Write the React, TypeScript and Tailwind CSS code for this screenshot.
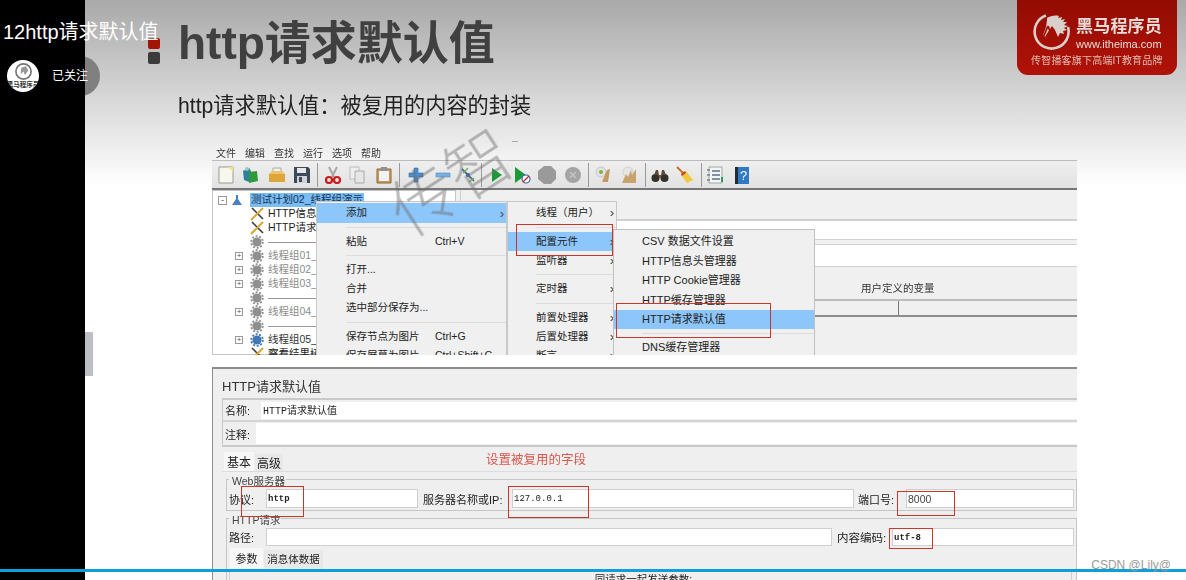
import React from 'react'

const Sep = ({ className }: { className: string }) => (
  <div className={`h-[24px] w-px bg-[#9a9a9a] ${className}`} />
)

const Ico = ({ className = '', children }: { className?: string; children: React.ReactNode }) => (
  <svg viewBox="0 0 18 18" className={`h-[18px] w-[18px] shrink-0 ${className}`}>
    {children}
  </svg>
)

const Toolbar = () => (
  <div className="flex h-[30px] items-center border-y border-t-[#bcbcbc] border-b-2 border-b-[#777] bg-[linear-gradient(180deg,#efefef,#e2e2e2)] pl-[5px]">
    <Ico><path d="M2 1h14v16H2z" fill="#f7f7ee" stroke="#9a9a9a" /><path d="M11 1h5v5z" fill="#f2e48a" /></Ico>
    <Ico className="ml-[6px]"><path d="M2 5l6-3 2 3-2 11-5-2z" fill="#2f7fa0" /><path d="M8 6l8-1 1 10-9 2z" fill="#2f9a3c" /><circle cx="6" cy="3" r="2" fill="#9cb" /></Ico>
    <Ico className="ml-[9px]"><path d="M5 6V2h8v4z" fill="#f0f0f0" stroke="#aaa" /><path d="M1 8h16v8H1z" fill="#dca63a" /><path d="M1 8l3-3h10l3 3z" fill="#eec46a" /></Ico>
    <Ico className="ml-[7px]"><path d="M1 1h14l2 2v14H1z" fill="#3d4a5c" /><path d="M4 2h9v5H4z" fill="#e8e8e8" /><path d="M4 10h10v7H4z" fill="#cfd3d8" /><path d="M6 11h3v5H6z" fill="#3d4a5c" /></Ico>
    <Sep className="ml-[6px]" />
    <Ico className="ml-[6px]"><path d="M5 1l5 10M13 1L8 11" stroke="#a8a8a8" strokeWidth="2" fill="none" /><circle cx="5" cy="14" r="3" fill="none" stroke="#c8201c" strokeWidth="2.2" /><circle cx="13" cy="14" r="3" fill="none" stroke="#c8201c" strokeWidth="2.2" /></Ico>
    <Ico className="ml-[6px]"><path d="M2 1h9v12H2z" fill="#efefef" stroke="#bbb" /><path d="M7 5h9v12H7z" fill="#e6e6e6" stroke="#aaa" /></Ico>
    <Ico className="ml-[9px]"><path d="M2 3h14v14H2z" fill="#c89b5c" stroke="#8c6a3a" /><path d="M4 5h10v10H4z" fill="#f2f2f2" /><path d="M6 1h6v4H6z" fill="#8d9298" /></Ico>
    <Sep className="ml-[6px]" />
    <Ico className="ml-[7px]"><path d="M7 2h4v5h5v4h-5v5H7v-5H2V7h5z" fill="#4b8fd0" stroke="#2d6aa5" strokeWidth=".6" /></Ico>
    <Ico className="ml-[9px]"><path d="M2 7h14v4H2z" fill="#7aaedb" stroke="#4b8fd0" strokeWidth=".6" /></Ico>
    <Ico className="ml-[7px]"><path d="M3 3l12 12" stroke="#4a6f9a" strokeWidth="1.8" /><path d="M4 7l5-5" stroke="#74b04a" strokeWidth="1.5" /><path d="M10 16l5-4" stroke="#74b04a" strokeWidth="1.5" /><circle cx="9" cy="9" r="2" fill="#2d66b0" /></Ico>
    <Sep className="ml-[4px]" />
    <Ico className="ml-[6px]"><path d="M4 2l10 7-10 7z" fill="#1c9a3a" /></Ico>
    <Ico className="ml-[7px]"><path d="M2 1l11 8-11 8z" fill="#1c9a3a" /><circle cx="13" cy="13" r="4" fill="#fff" stroke="#3565b5" strokeWidth="1.2" /><path d="M10 16l6-6" stroke="#d02020" strokeWidth="1.2" /></Ico>
    <Ico className="ml-[7px]"><path d="M6 0h7l5 5v8l-5 5H6l-6-5V5z" fill="#9a9a9a" /></Ico>
    <Ico className="ml-[8px]"><circle cx="9" cy="9" r="8" fill="#a4a4a4" /><path d="M6 6l6 6M12 6l-6 6" stroke="#c4c4c4" strokeWidth="1.5" /></Ico>
    <Sep className="ml-[6px]" />
    <Ico className="ml-[5px]"><circle cx="7" cy="6" r="5" fill="#e3e3e3" stroke="#c8c8c8" /><circle cx="7" cy="6" r="2" fill="#7cb342" /><path d="M8 16l5-12 3-1-2 13z" fill="#c49a62" /></Ico>
    <Ico className="ml-[9px]"><circle cx="7" cy="6" r="5" fill="#e6e6e6" stroke="#cfcfcf" /><path d="M1 17l4-9 2 3 3-7 1 5 4-6v14z" fill="#c9a26e" /></Ico>
    <Sep className="ml-[6px]" />
    <Ico className="ml-[5px]"><circle cx="4.5" cy="12" r="4" fill="#33302c" /><circle cx="13.5" cy="12" r="4" fill="#33302c" /><path d="M3 9l2-5h2l1 5zM10 9l1-5h2l2 5z" fill="#5b4a3a" /><path d="M8 9h2v3H8z" fill="#7a5a3a" /></Ico>
    <Ico className="ml-[7px]"><path d="M1 1l7 7" stroke="#b9772a" strokeWidth="2" /><path d="M5 9l5-4 7 9-6 3z" fill="#f1c93e" /><path d="M5 8l4-3 1 2-4 3z" fill="#c8402a" /></Ico>
    <Sep className="ml-[7px]" />
    <Ico className="ml-[4px]"><path d="M3 1h13v16H3z" fill="#f4f4f4" stroke="#9aa" /><path d="M6 5h8M6 9h8M6 13h8" stroke="#5e6f86" strokeWidth="1.6" /><path d="M1 4h3M1 9h3M1 14h3" stroke="#555" /><path d="M15 11h2v5h-2z" fill="#2e9a5a" /></Ico>
    <Ico className="ml-[9px]"><path d="M2 1h14v17H2z" fill="#2f79c6" /><path d="M2 1h3v17H2z" fill="#1e2c3e" /><text x="7" y="14" fontSize="13" fill="#fff">?</text></Ico>
  </div>
)

const Gear = ({ color = '#8f8f8f' }: { color?: string }) => (
  <svg viewBox="0 0 14 14" className="h-[14px] w-[14px] shrink-0">
    <circle cx="7" cy="7" r="4.6" fill={color} />
    <circle cx="7" cy="7" r="5.8" fill="none" stroke={color} strokeWidth="1.8" strokeDasharray="2 1.6" />
  </svg>
)

const Wrench = () => (
  <svg viewBox="0 0 14 14" className="h-[14px] w-[14px] shrink-0">
    <path d="M2 1l11 11" stroke="#3a3a3a" strokeWidth="1.6" />
    <path d="M13 1L1 13" stroke="#d6a93a" strokeWidth="2.2" />
  </svg>
)

const Expander = ({ show }: { show: boolean }) => (
  <div className="flex w-[12px] shrink-0 items-center justify-center">
    {show && (
      <div className="flex h-[8px] w-[8px] items-center justify-center border border-[#9a9a9a] bg-white text-[8px] leading-none text-[#555]">
        +
      </div>
    )}
  </div>
)

const TreeRow = ({ plus, icon, children }: { plus?: boolean; icon: React.ReactNode; children?: React.ReactNode }) => (
  <div className="flex h-[14px] items-center whitespace-nowrap pl-[20px]">
    <Expander show={!!plus} />
    <div className="ml-[4px] flex w-[16px] justify-center">{icon}</div>
    <div className="ml-[3px] flex-1 overflow-hidden">{children}</div>
  </div>
)

const GroupName = ({ label, dim = true }: { label: string; dim?: boolean }) => (
  <span className={dim ? 'text-[#8c8c8c]' : 'text-[#333]'}>{label}</span>
)

const Line = () => <div className="mr-[10px] h-px bg-[#999]" />

const Tree = () => (
  <div className="w-[244px] shrink-0 border border-[#c4c4c4] bg-white pt-[2px] text-[10.5px] text-[#222]">
    <div className="flex h-[14px] items-center whitespace-nowrap pl-[5px]">
      <div className="flex h-[9px] w-[9px] items-center justify-center border border-[#9a9a9a] text-[9px] leading-none text-[#555]">-</div>
      <div className="ml-[5px] h-[10px] w-[10px]">
        <svg viewBox="0 0 10 10"><path d="M4 0h2v4l4 6H0l4-6z" fill="#4a7fc0" /></svg>
      </div>
      <div className="ml-[8px] flex h-[14px] w-[114px] items-center bg-[#79bcf6] pl-px text-[#14324e]">测试计划02_线程组演示</div>
    </div>
    <TreeRow icon={<Wrench />}>HTTP信息头管理器</TreeRow>
    <TreeRow icon={<Wrench />}>HTTP请求默认值</TreeRow>
    <TreeRow icon={<Gear />}><Line /></TreeRow>
    <TreeRow plus icon={<Gear />}><GroupName label="线程组01_基本" /></TreeRow>
    <TreeRow plus icon={<Gear />}><GroupName label="线程组02_基本" /></TreeRow>
    <TreeRow plus icon={<Gear />}><GroupName label="线程组03_基本" /></TreeRow>
    <TreeRow icon={<Gear />}><Line /></TreeRow>
    <TreeRow plus icon={<Gear />}><GroupName label="线程组04_基本" /></TreeRow>
    <TreeRow icon={<Gear />}><Line /></TreeRow>
    <TreeRow plus icon={<Gear color="#3f78b5" />}><GroupName label="线程组05_基本" dim={false} /></TreeRow>
    <TreeRow icon={<Wrench />}>察看结果树</TreeRow>
  </div>
)

const Divider = ({ h, inset = 'ml-[29px]' }: { h: string; inset?: string }) => (
  <div className={`flex items-center ${h}`}>
    <div className={`h-px flex-1 bg-[#dcdcdc] ${inset}`} />
  </div>
)

const Item = ({
  label,
  right,
  arrow,
  active,
  h = 'h-[19px]',
  pl = 'pl-[29px]',
}: {
  label: string
  right?: string
  arrow?: boolean
  active?: boolean
  h?: string
  pl?: string
}) => (
  <div className={`relative flex items-center whitespace-nowrap ${h} ${pl} ${active ? 'bg-[#8cc6fa]' : ''}`}>
    <span>{label}</span>
    {right && <span className="absolute left-[118px]">{right}</span>}
    {arrow && <span className="absolute right-[2px] text-[13px] leading-none text-[#444]">›</span>}
  </div>
)

const ContextMenus = () => (
  <>
    <div className="absolute left-[104px] top-[54px] z-10 h-[170px] w-[191px] border border-[#c8c8c8] bg-[#f0f0f0] pt-[1px] text-[10.5px] text-[#222]">
      <Item label="添加" arrow active h="h-[20px]" />
      <Divider h="h-[9px]" />
      <Item label="粘贴" right="Ctrl+V" />
      <Divider h="h-[9px]" />
      <Item label="打开..." />
      <Item label="合并" />
      <Item label="选中部分保存为..." />
      <Divider h="h-[10px]" />
      <Item label="保存节点为图片" right="Ctrl+G" />
      <Item label="保存屏幕为图片" right="Ctrl+Shift+G" />
    </div>
    <div className="absolute left-[295px] top-[54px] z-10 h-[170px] w-[110px] border border-[#c8c8c8] bg-[#f0f0f0] pt-[1px] text-[10.5px] text-[#222]">
      <Item label="线程（用户）" arrow pl="pl-[28px]" />
      <Divider h="h-[10px]" inset="ml-[28px]" />
      <Item label="配置元件" arrow active pl="pl-[28px]" />
      <Item label="监听器" arrow pl="pl-[28px]" />
      <Divider h="h-[9px]" inset="ml-[28px]" />
      <Item label="定时器" arrow pl="pl-[28px]" />
      <Divider h="h-[10px]" inset="ml-[28px]" />
      <Item label="前置处理器" arrow pl="pl-[28px]" />
      <Item label="后置处理器" arrow pl="pl-[28px]" />
      <Item label="断言" arrow pl="pl-[28px]" />
    </div>
    <div className="absolute left-[401px] top-[82px] z-20 h-[140px] w-[202px] border border-[#c0c0c0] bg-[#f0f0f0] pt-[2px] text-[11px] text-[#222]">
      <Item label="CSV 数据文件设置" pl="pl-[28px]" />
      <Item label="HTTP信息头管理器" h="h-[20px]" pl="pl-[28px]" />
      <Item label="HTTP Cookie管理器" pl="pl-[28px]" />
      <Item label="HTTP缓存管理器" h="h-[20px]" pl="pl-[28px]" />
      <Item label="HTTP请求默认值" active pl="pl-[28px]" />
      <Divider h="h-[9px]" inset="ml-[28px]" />
      <Item label="DNS缓存管理器" pl="pl-[28px]" />
    </div>
    <div className="absolute left-[304px] top-[77px] z-30 h-[32px] w-[97px] border border-[#c8352b]" />
    <div className="absolute left-[404px] top-[156px] z-30 h-[35px] w-[155px] border border-[#c8352b]" />
  </>
)

const JMeterTop = () => (
  <section className="relative ml-[127px] h-[208px] w-[865px] shrink-0 overflow-hidden blur-[0.35px]">
    <div className="flex h-[13px] items-center gap-[9px] pl-[4px] text-[10px] leading-none text-[#333]">
      <span>文件</span>
      <span>编辑</span>
      <span>查找</span>
      <span>运行</span>
      <span>选项</span>
      <span>帮助</span>
    </div>
    <Toolbar />
    <div className="flex h-[165px] bg-[#f0f0f0]">
      <Tree />
      <div className="ml-[4px] flex flex-1 flex-col">
        <div className="h-[31px] border-b-2 border-l border-[#cfcfcf]" />
        <div className="h-[18px] bg-white" />
        <div className="h-[6px] border-y border-[#d2d2d2] bg-[#f0f0f0]" />
        <div className="h-[21px] bg-white" />
        <div className="flex h-[33px] items-end border-t border-[#d0d0d0] pb-[2px] text-[10.5px] text-[#333]">
          <span className="ml-[401px]">用户定义的变量</span>
        </div>
        <div className="flex h-[18px] border-y-2 border-t-[#bcbcbc] border-b-[#8c8c8c]">
          <div className="ml-[438px] w-px bg-[#777]" />
        </div>
      </div>
    </div>
    <ContextMenus />
  </section>
)

const Field = ({ className, value }: { className: string; value?: string }) => (
  <div className={`flex shrink-0 items-center border border-[#cfcfcf] bg-white pl-px text-[#222] ${className}`}>
    {value}
  </div>
)

const mono = "[font-family:'Liberation_Mono','Noto_Sans_CJK_SC',monospace]"

const JMeterBottom = () => (
  <section className="relative ml-[127px] h-[213px] w-[865px] shrink-0 overflow-hidden border-t-2 border-l border-[#8c8c8c] bg-[#efefef] pl-[9px] text-[11px] text-[#222] blur-[0.35px]">
    <div className="flex h-[29px] items-center pt-[7px] text-[13px] text-[#333]">HTTP请求默认值</div>
    <div className="h-[49px] border-y-2 border-l border-[#c9c9c9]">
      <div className="flex h-[22px] items-center border-b-2 border-[#d4d4d4] pl-[2px]">
        <span className="w-[36px] shrink-0 pt-[3px]">名称:</span>
        <div className={`flex h-[17px] flex-1 items-center bg-white pt-[3px] pl-[2px] text-[10px] ${mono}`}>HTTP请求默认值</div>
      </div>
      <div className="flex h-[23px] items-center pl-[2px]">
        <span className="w-[31px] shrink-0 pt-[3px]">注释:</span>
        <div className="h-[21px] flex-1 bg-white" />
      </div>
    </div>
    <div className="relative flex h-[25px] items-end border-b border-[#dcdcdc] pl-[2px]">
      <div className="flex h-[19px] w-[30px] items-center justify-center bg-[#f7f7f7] pt-[3px] text-[12px]">基本</div>
      <div className="ml-px flex h-[17px] w-[28px] items-center justify-center bg-[#e8e8e8] pt-[2px] text-[12px]">高级</div>
      <div className="ml-[203px] flex h-[24px] items-center pt-[2px] text-[12.5px] text-[#d9574c]">设置被复用的字段</div>
    </div>
    <div className="mt-[7px] ml-[4px] h-[32px] border border-[#c6c6c6] pl-[2px]">
      <div className="mt-[-3px] flex h-[9px] w-fit items-center bg-[#efefef] pl-[3px] pr-px text-[10.5px] text-[#444]">Web服务器</div>
      <div className="mt-[2px] flex h-[20px] items-center">
        <span className="w-[37px] shrink-0 pt-[4px]">协议:</span>
        <Field className={`h-[19px] w-[152px] pt-[4px] text-[9px] font-bold ${mono}`} value="http" />
        <span className="ml-[5px] w-[89px] shrink-0 whitespace-nowrap pt-[4px]">服务器名称或IP:</span>
        <Field className={`h-[19px] w-[342px] pt-[4px] pl-[2px] text-[9px] ${mono}`} value="127.0.0.1" />
        <span className="ml-[4px] w-[48px] shrink-0 pt-[4px]">端口号:</span>
        <Field className="h-[19px] w-[168px] pt-[3px] pl-[1px] text-[10.5px] text-[#444]" value="8000" />
      </div>
    </div>
    <div className="mt-[7px] ml-[4px] h-[70px] border border-[#c6c6c6] pl-[2px]">
      <div className="mt-[-3px] flex h-[9px] w-fit items-center bg-[#efefef] pl-[3px] pr-px text-[10.5px] text-[#444]">HTTP请求</div>
      <div className="mt-[2px] flex h-[20px] items-center">
        <span className="w-[37px] shrink-0 pt-[3px]">路径:</span>
        <Field className="h-[18px] w-[566px]" />
        <span className="ml-[5px] w-[55px] shrink-0 whitespace-nowrap pt-[3px] text-[11.5px]">内容编码:</span>
        <Field className={`h-[18px] w-[182px] pt-[3px] pl-[4px] text-[9px] font-bold ${mono}`} value="utf-8" />
      </div>
      <div className="flex h-[22px] items-end pl-px">
        <div className="flex h-[21px] w-[33px] items-center justify-center bg-[#f7f7f7] pt-[2px]">参数</div>
        <div className="ml-px flex h-[19px] w-[59px] items-center justify-center bg-[#e8e8e8] text-[10.5px]">消息体数据</div>
      </div>
      <div className="mr-[4px] h-[20px] border border-[#d0d0d0] pt-[2px] text-center text-[10.5px]">
        <span className="ml-[-14px]">同请求一起发送参数:</span>
      </div>
    </div>
    <div className="absolute left-[28px] top-[117px] h-[31px] w-[63px] border border-[#c8352b]" />
    <div className="absolute left-[295px] top-[117px] h-[32px] w-[81px] border border-[#c8352b]" />
    <div className="absolute left-[684px] top-[122px] h-[25px] w-[58px] border border-[#c8352b]" />
    <div className="absolute left-[676px] top-[159px] h-[21px] w-[44px] border border-[#d0372c]" />
  </section>
)

const BrandMark = () => (
  <svg viewBox="0 0 40 40" className="h-[40px] w-[40px] shrink-0">
    <path d="M15 3.5A17 17 0 1 0 37 15" fill="none" stroke="#d9cfcb" strokeWidth="2.6" />
    <path
      d="M16 6c3-2 8-3 12-2l-1 2 4-1-1 3 4-1-2 3 4 0-3 3 4 1-4 2 3 2-4 1 1 3-4-1-2 4-3-7-3-4-4 6-3 5-2-2 3-8 1-7z"
      fill="#d9cfcb"
    />
    <path d="M17 14l-6 14M17 14l5 13" stroke="#a50e06" strokeWidth="1.8" fill="none" />
  </svg>
)

const Logo = () => (
  <div className="mr-[9px] ml-auto flex h-[75px] w-[160px] shrink-0 flex-col rounded-b-[11px] bg-[linear-gradient(180deg,#930c02,#b01208)] pl-[14px] blur-[0.3px]">
    <div className="mt-[12px] flex h-[40px]">
      <BrandMark />
      <div className="mt-[5px] ml-[5px] text-[#e6dcd8]">
        <div className="text-[17px] leading-[20px] font-bold tracking-[0.2px] whitespace-nowrap">黑马程序员</div>
        <div className="text-[11px] leading-[14px] whitespace-nowrap">www.itheima.com</div>
      </div>
    </div>
    <div className="mt-[2px] text-[10px] leading-[13px] tracking-[0.2px] whitespace-nowrap text-[#e0bdb4]">传智播客旗下高端IT教育品牌</div>
  </div>
)

const Avatar = () => (
  <div className="relative flex h-[32px] w-[32px] flex-col items-center overflow-hidden rounded-full bg-white">
    <svg viewBox="0 0 40 40" className="mt-[2px] h-[19px] w-[19px]">
      <circle cx="20" cy="20" r="16" fill="none" stroke="#777" strokeWidth="3.5" />
      <path d="M15 12l10-3 5 9-7 10-3-8-6 6z" fill="#999" />
    </svg>
    <div className="text-[6.5px] leading-[8px] font-bold whitespace-nowrap text-[#333]">黑马程序员</div>
  </div>
)

export default function App() {
  return (
    <div className="relative flex h-[580px] w-[1186px] overflow-hidden bg-white [font-family:'Liberation_Sans','Noto_Sans_CJK_SC',sans-serif]">
      <aside className="relative z-10 w-[85px] shrink-0 bg-black" />

      <main className="flex min-w-0 flex-1 flex-col bg-[linear-gradient(180deg,#a9a9a9_0px,#e6e6e6_130px,#ffffff_185px)]">
        <header className="flex h-[147px] shrink-0 items-start pl-[63px]">
          <div className="mt-[38px] flex w-[12px] shrink-0 flex-col gap-[3px] blur-[0.3px]">
            <div className="h-[11px] rounded-[2px] bg-[#a41405]" />
            <div className="h-[12px] rounded-[2px] bg-[#3b3b3b]" />
          </div>
          <div className="ml-[18px] blur-[0.3px]">
            <h1 className="mt-[14px] text-[46px] leading-[58px] font-bold whitespace-nowrap text-[#404040]">http请求默认值</h1>
            <p className="mt-[19px] text-[21.2px] leading-[30px] whitespace-nowrap text-[#222]">http请求默认值：被复用的内容的封装</p>
          </div>
          <Logo />
        </header>
        <JMeterTop />
        <div className="h-[12px] shrink-0" />
        <JMeterBottom />
      </main>

      {/* player overlays */}
      <div className="absolute top-[19px] left-[3px] z-20 text-[20px] leading-[26px] whitespace-nowrap text-white">12http请求默认值</div>
      <div className="absolute top-[56px] left-[60px] h-[40px] w-[40px] rounded-full bg-[#808080]" />
      <div className="absolute top-[60px] left-[7px] z-20 flex items-center">
        <Avatar />
        <span className="ml-[13px] text-[12px] text-white">已关注</span>
      </div>
      <div className="absolute top-[332px] left-[85px] h-[44px] w-[8px] bg-[#bcc0c4]" />
      <div className="absolute top-[150px] left-[386px] z-30 rotate-[-33deg] text-[66px] leading-none font-extralight text-[#6a6a6a]/45">传智</div>
      <div className="absolute top-[141px] left-[512px] h-px w-[6px] bg-[#aaa]" />
      <div className="absolute inset-x-0 top-[569px] z-40 h-[3px] bg-[#0f9fd8]" />
      <div className="absolute top-[558px] right-[15px] z-50 text-[12px] leading-[14px] text-[#9a9a9a]">CSDN @Lily@</div>
    </div>
  )
}
